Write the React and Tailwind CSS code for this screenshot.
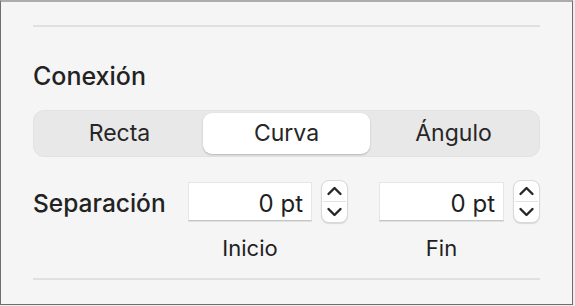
import React from "react";

function Stepper() {
  return (
    <div className="relative w-[27px] h-[43px] rounded-[8px] bg-white border border-[#d9d9d9] shadow-[0_1px_1px_rgba(0,0,0,0.12)]">
      <svg width="27" height="43" viewBox="0 0 27 43" className="absolute left-[-1px] top-[-1px]">
        <line x1="2" y1="21.5" x2="25" y2="21.5" stroke="#e3e3e3" strokeWidth="1" />
        <path d="M7.5 14 L13.5 8 L19.5 14" fill="none" stroke="#262626" strokeWidth="2.4" strokeLinecap="round" strokeLinejoin="round" />
        <path d="M7.5 29 L13.5 35 L19.5 29" fill="none" stroke="#262626" strokeWidth="2.4" strokeLinecap="round" strokeLinejoin="round" />
      </svg>
    </div>
  );
}

function Field({ label, width }) {
  return (
    <div className="flex flex-col">
      <div className="flex items-center gap-[9px] h-[43px]">
        <div
          className={`${width} h-[39px] bg-white border border-[#e6e6e6] border-b-[#c4c4c4] shadow-[0_1px_0_rgba(0,0,0,0.08)] flex items-center justify-end pr-[8px] pt-[3px] text-[24px] leading-[29px] text-[#1f1f1f]`}
        >
          0 pt
        </div>
        <Stepper />
      </div>
      <div className={`${width} text-center mt-[12px] text-[22px] leading-[27px] text-[#1f1f1f]`}>{label}</div>
    </div>
  );
}

export default function App() {
  return (
    <div className="w-[575px] h-[306px] bg-[#ececec]" style={{ fontFamily: "Inter, 'Liberation Sans', sans-serif" }}>
      <div className="w-[573px] h-[305px] bg-[#f5f5f5] border-t-2 border-t-[#adadad] border-l border-r border-b border-l-[#6e6e6e] border-r-[#6e6e6e] border-b-[#6e6e6e] px-[32px] flex flex-col">
        <div className="mt-[23px] h-[2px] bg-[#e0e0e0]" />
        <div className="mt-[35px] text-[25px] leading-[29px] font-medium text-[#222]">Conexión</div>
        <div className="mt-[19px] h-[47px] rounded-[11px] bg-[#e8e8e8] border border-[#e2e2e2] p-[2px] grid grid-cols-3 text-[23px] text-[#262626]">
          <div className="flex items-center justify-center">Recta</div>
          <div className="flex items-center justify-center rounded-[9px] bg-white shadow-[0_1px_2px_rgba(0,0,0,0.22)]">Curva</div>
          <div className="flex items-center justify-center">Ángulo</div>
        </div>
        <div className="mt-[23px] flex items-start">
          <div className="w-[155px] h-[43px] flex items-center pt-[4px] text-[24.5px] leading-[29px] font-medium text-[#222]">
            Separación
          </div>
          <Field label="Inicio" width="w-[124px]" />
          <div className="ml-[31px]">
            <Field label="Fin" width="w-[125px]" />
          </div>
        </div>
        <div className="mt-[16px] h-[2px] bg-[#e0e0e0]" />
      </div>
    </div>
  );
}
